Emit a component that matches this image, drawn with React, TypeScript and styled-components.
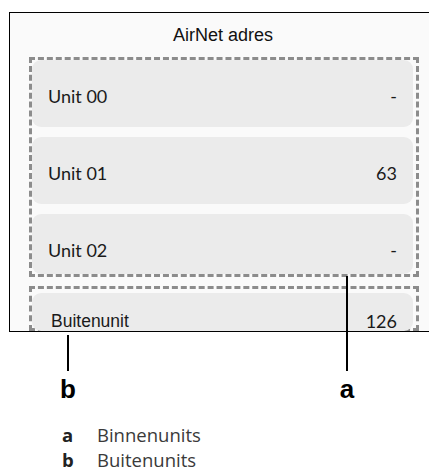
import React from "react";
import styled, { createGlobalStyle } from "styled-components";

const Global = createGlobalStyle`
  html, body { margin: 0; padding: 0; background: #ffffff; }
  * { box-sizing: border-box; }
`;

const Page = styled.div`
  position: relative;
  width: 429px;
  height: 472px;
  overflow: hidden;
  background: #ffffff;
`;

const Screen = styled.div`
  margin: 12px 0 0 9px;
  width: 428px;
  height: 320px;
  border: 1px solid #000;
  background: #fafafa;
  overflow: hidden;
  display: flex;
  flex-direction: column;
`;

const Title = styled.div`
  height: 44px;
  display: flex;
  align-items: center;
  justify-content: center;
  font-family: "Liberation Sans", Arial, sans-serif;
  font-size: 18px;
  color: #111;
`;

const Group = styled.div<{ $gapTop?: number; $padTop?: number; $h?: number }>`
  margin: ${(p) => p.$gapTop ?? 0}px 0 0 19px;
  width: 390px;
  ${(p) => (p.$h ? `height: ${p.$h}px;` : "")}
  border: 3px dashed #8c8c8c;
  padding: ${(p) => p.$padTop ?? 0}px 3px 0 0;
  display: flex;
  flex-direction: column;
  gap: 10px;
`;

const Card = styled.div<{ $h: number; $padTop: number }>`
  height: ${(p) => p.$h}px;
  flex: none;
  background: #ebebeb;
  border-radius: 9px;
  display: flex;
  align-items: flex-start;
  justify-content: space-between;
  padding: ${(p) => p.$padTop}px 16px 0 16px;
  line-height: 22px;
  font-family: Lato, "Noto Sans", sans-serif;
  font-size: 18px;
  color: #1a1a1a;
`;

const Name = styled.span<{ $plain?: boolean }>`
  ${(p) =>
    p.$plain
      ? `font-family: "Liberation Sans", Arial, sans-serif; font-size: 17.5px; margin-left: 3px;`
      : ""}
`;

const Value = styled.span``;

const Callout = styled.div<{ $x: number; $y: number }>`
  position: absolute;
  left: ${(p) => p.$x - 10}px;
  top: ${(p) => p.$y}px;
  width: 20px;
  display: flex;
  flex-direction: column;
  align-items: center;
`;

const Leader = styled.div<{ $len: number }>`
  width: 2px;
  height: ${(p) => p.$len}px;
  background: #000;
`;

const Tag = styled.div`
  margin-top: 5px;
  font-family: "Liberation Sans", Arial, sans-serif;
  font-weight: 700;
  font-size: 26px;
  line-height: 26px;
  color: #000;
`;

const Legend = styled.div`
  margin: 94px 0 0 62px;
  display: flex;
  flex-direction: column;
  gap: 7px;
  font-family: "Open Sans", "Noto Sans", sans-serif;
  font-size: 18.5px;
  line-height: 18px;
  color: #3a3a3a;
`;

const LegendRow = styled.div`
  display: flex;
`;

const Key = styled.span`
  width: 35px;
  font-weight: 700;
  color: #222;
`;

const units = [
  { name: "Unit 00", value: "-", h: 67 },
  { name: "Unit 01", value: "63", h: 67 },
  { name: "Unit 02", value: "-", h: 60 },
];

export default function App() {
  return (
    <>
      <Global />
      <Page>
        <Screen>
          <Title>AirNet adres</Title>
          <Group>
            {units.map((u) => (
              <Card key={u.name} $h={u.h} $padTop={25}>
                <Name>{u.name}</Name>
                <Value>{u.value}</Value>
              </Card>
            ))}
          </Group>
          <Group $gapTop={9} $padTop={4} $h={45}>
            <Card $h={38} $padTop={17}>
              <Name $plain>Buitenunit</Name>
              <Value>126</Value>
            </Card>
          </Group>
        </Screen>
        <Legend>
          <LegendRow>
            <Key>a</Key>
            <span>Binnenunits</span>
          </LegendRow>
          <LegendRow>
            <Key>b</Key>
            <span>Buitenunits</span>
          </LegendRow>
        </Legend>
        <Callout $x={347} $y={276}>
          <Leader $len={95} />
          <Tag>a</Tag>
        </Callout>
        <Callout $x={68} $y={335}>
          <Leader $len={36} />
          <Tag>b</Tag>
        </Callout>
      </Page>
    </>
  );
}
